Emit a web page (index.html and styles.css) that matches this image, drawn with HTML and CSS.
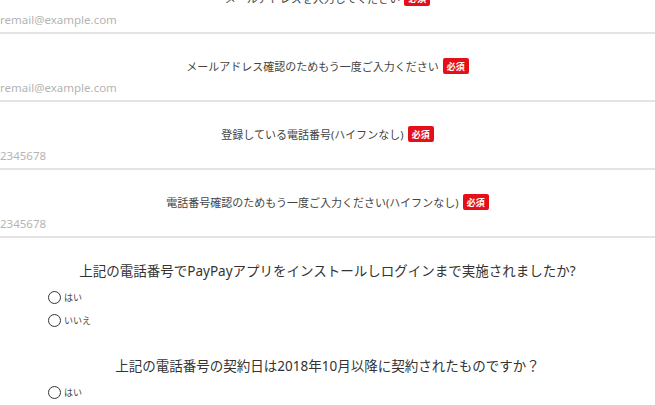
FILE: index.html
```html
<!DOCTYPE html>
<html lang="ja">
<head>
    <meta charset="UTF-8">
    <meta name="viewport" content="width=device-width, initial-scale=1.0">
    <title>お申し込みフォーム</title>
    <link rel="stylesheet" href="styles.css">
</head>
<body>
    <form class="entry-form">
        <div class="field field-first">
            <div class="field-label">メールアドレスを入力してください<span class="required">必須</span></div>
            <input class="field-input" type="text" placeholder="remail@example.com">
        </div>
        <div class="field">
            <div class="field-label">メールアドレス確認のためもう一度ご入力ください<span class="required">必須</span></div>
            <input class="field-input" type="text" placeholder="remail@example.com">
        </div>
        <div class="field">
            <div class="field-label">登録している電話番号(ハイフンなし)<span class="required">必須</span></div>
            <input class="field-input" type="text" placeholder="2345678">
        </div>
        <div class="field">
            <div class="field-label">電話番号確認のためもう一度ご入力ください(ハイフンなし)<span class="required">必須</span></div>
            <input class="field-input" type="text" placeholder="2345678">
        </div>

        <div class="question">
            <p class="question-title">上記の電話番号でPayPayアプリをインストールしログインまで実施されましたか?</p>
            <label class="option"><input type="radio" name="installed"><span>はい</span></label>
            <label class="option"><input type="radio" name="installed"><span>いいえ</span></label>
        </div>
        <div class="question">
            <p class="question-title">上記の電話番号の契約日は2018年10月以降に契約されたものですか？</p>
            <label class="option"><input type="radio" name="contract"><span>はい</span></label>
            <label class="option"><input type="radio" name="contract"><span>いいえ</span></label>
        </div>
    </form>
</body>
</html>
```

FILE: styles.css
```css
body, html {
    margin: 0;
    padding: 0;
    overflow: hidden;
    background-color: #fff;
    color: #333;
    font-family: "Noto Sans", "Noto Sans CJK JP", sans-serif;
}

.entry-form {
    display: flex;
    flex-direction: column;
}

.field {
    padding-top: 24px;
    border-bottom: 2px solid #e4e4e4;
}

.field-first {
    margin-top: -34px;
}

.field-label {
    display: flex;
    justify-content: center;
    align-items: center;
    gap: 4px;
    height: 16px;
    font-size: 11px;
    color: #444;
}

.required {
    display: inline-flex;
    align-items: center;
    justify-content: center;
    width: 26px;
    height: 16px;
    border-radius: 2px;
    background-color: #e50f1a;
    color: #fff;
    font-size: 9px;
    font-weight: bold;
}

.field-input {
    display: block;
    box-sizing: border-box;
    width: 100%;
    height: 26px;
    margin: 0;
    padding: 0;
    border: none;
    outline: none;
    background: transparent;
    font-family: inherit;
    font-size: 11.5px;
    color: #333;
}

.field-input::placeholder {
    color: #b4b4b4;
}

.question {
    display: flex;
    flex-direction: column;
    gap: 7px;
    padding-left: 48px;
    margin-top: 28px;
}

.field + .question {
    margin-top: 23px;
}

.question-title {
    margin: 0 0 1px -48px;
    height: 20px;
    line-height: 20px;
    text-align: center;
    font-size: 13.5px;
    color: #333;
}

.option {
    display: flex;
    align-items: center;
    gap: 3px;
    height: 16px;
    font-size: 9px;
    color: #444;
}

.option input {
    appearance: none;
    width: 13px;
    height: 13px;
    margin: 0;
    border: 1.5px solid #333;
    border-radius: 50%;
    background: #fff;
}
```
